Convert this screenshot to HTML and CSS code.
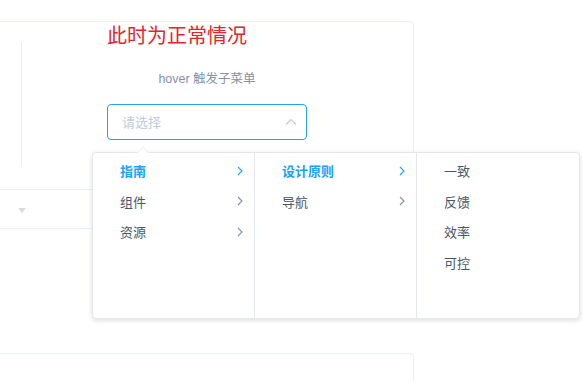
FILE: index.html
```html
<!DOCTYPE html>
<html lang="zh-CN">
<head>
<meta charset="utf-8">
<title>Cascader</title>
<link rel="stylesheet" href="styles.css">
</head>
<body>
<div class="page">
  <section class="demo">
    <div class="demo-source">
      <div class="half half-left"></div>
      <div class="half half-right">
        <h3 class="note">此时为正常情况</h3>
        <div class="block">
          <span class="demonstration">hover 触发子菜单</span>
          <div class="select">
            <span class="placeholder">请选择</span>
            <svg class="select-arrow" width="12" height="8" viewBox="0 0 12 8"><polyline points="1,6.5 6,1.5 11,6.5" fill="none" stroke="#bfcbd9" stroke-width="1.2"/></svg>
          </div>
        </div>
      </div>
    </div>
    <div class="demo-control"><i class="caret"></i></div>
  </section>
  <section class="demo demo-second"></section>
</div>

<div class="cascader-menus">
  <span class="popper-arrow"></span>
  <ul class="menu">
    <li class="item active"><span>指南</span><svg class="chev" width="6" height="10" viewBox="0 0 6 10"><polyline points="1,1 5,5 1,9" fill="none" stroke="currentColor" stroke-width="1.1"/></svg></li>
    <li class="item"><span>组件</span><svg class="chev" width="6" height="10" viewBox="0 0 6 10"><polyline points="1,1 5,5 1,9" fill="none" stroke="currentColor" stroke-width="1.1"/></svg></li>
    <li class="item"><span>资源</span><svg class="chev" width="6" height="10" viewBox="0 0 6 10"><polyline points="1,1 5,5 1,9" fill="none" stroke="currentColor" stroke-width="1.1"/></svg></li>
  </ul>
  <ul class="menu">
    <li class="item active"><span>设计原则</span><svg class="chev" width="6" height="10" viewBox="0 0 6 10"><polyline points="1,1 5,5 1,9" fill="none" stroke="currentColor" stroke-width="1.1"/></svg></li>
    <li class="item"><span>导航</span><svg class="chev" width="6" height="10" viewBox="0 0 6 10"><polyline points="1,1 5,5 1,9" fill="none" stroke="currentColor" stroke-width="1.1"/></svg></li>
  </ul>
  <ul class="menu menu-last">
    <li class="item"><span>一致</span></li>
    <li class="item"><span>反馈</span></li>
    <li class="item"><span>效率</span></li>
    <li class="item"><span>可控</span></li>
  </ul>
</div>
</body>
</html>
```

FILE: styles.css
```css
* { box-sizing: border-box; }

html, body {
  margin: 0;
  padding: 0;
  background: #ffffff;
  overflow: hidden;
}

body {
  width: 583px;
  height: 381px;
  position: relative;
  font-family: "Liberation Sans", "Noto Sans CJK SC", sans-serif;
  color: #48576a;
}

.page {
  padding-top: 21px;
}

.demo {
  margin-left: -370px;
  width: 784px;
  border: 1px solid #eaeefb;
  border-radius: 4px;
  background: #fff;
}

.demo-source {
  height: 167px;
  display: grid;
  grid-template-columns: 391px 1fr;
}

.half-left {
  align-self: start;
  margin-top: 20px;
  height: 125px;
  border-right: 1px solid #eaeefb;
}

.half-right {
  padding-left: 85px;
}

.note {
  margin: 0;
  font-family: "Noto Sans CJK SC", sans-serif;
  font-weight: normal;
  font-size: 20px;
  line-height: 26px;
  color: #e3242b;
}

.block {
  width: 200px;
  padding-top: 23px;
}

.demonstration {
  display: block;
  text-align: center;
  font-size: 12.5px;
  line-height: 16px;
  color: #8492a6;
  font-family: "Liberation Sans", "Noto Sans CJK SC", sans-serif;
}

.select {
  margin-top: 17px;
  height: 36px;
  width: 200px;
  border: 1px solid #20a0ff;
  border-radius: 4px;
  display: flex;
  align-items: center;
  justify-content: space-between;
  padding: 0 9px 2px 14px;
}

.placeholder {
  font-family: "Noto Sans CJK SC", sans-serif;
  font-size: 13px;
  color: #c0ccda;
}

.select-arrow {
  display: block;
  margin-top: 2px;
}

.demo-control {
  height: 39px;
  border-top: 1px solid #eaeefb;
  display: flex;
  justify-content: center;
  align-items: center;
  padding-top: 3px;
}

.caret {
  width: 0;
  height: 0;
  border-left: 4.5px solid transparent;
  border-right: 4.5px solid transparent;
  border-top: 5px solid #d3dce6;
}

.demo-second {
  margin-top: 124px;
  height: 100px;
}

.cascader-menus {
  position: absolute;
  left: 92px;
  top: 152px;
  width: 488px;
  height: 167px;
  display: flex;
  background: #fff;
  border: 1px solid #e4e7ec;
  border-radius: 4px;
  box-shadow: 0 2px 4px rgba(0, 0, 0, 0.10), 0 0 6px rgba(0, 0, 0, 0.04);
}

.popper-arrow {
  position: absolute;
  left: 46px;
  top: -5px;
  width: 8px;
  height: 8px;
  background: #fff;
  border-left: 1px solid #eef1f6;
  border-top: 1px solid #eef1f6;
  transform: rotate(45deg);
}

.menu {
  list-style: none;
  margin: 0;
  padding: 3px 0 0;
  width: 162px;
  border-right: 1px solid #e4e7ec;
  position: relative;
  background: transparent;
}

.menu-last {
  border-right: none;
}

.item {
  height: 30.6px;
  display: flex;
  align-items: center;
  justify-content: space-between;
  padding: 0 11px 1px 27px;
  font-family: "Noto Sans CJK SC", sans-serif;
  font-size: 13px;
  color: #48576a;
}

.item.active {
  color: #20a0ff;
  font-weight: bold;
}

.chev {
  display: block;
  color: #8391a5;
}

.item.active .chev {
  color: #20a0ff;
}
```
